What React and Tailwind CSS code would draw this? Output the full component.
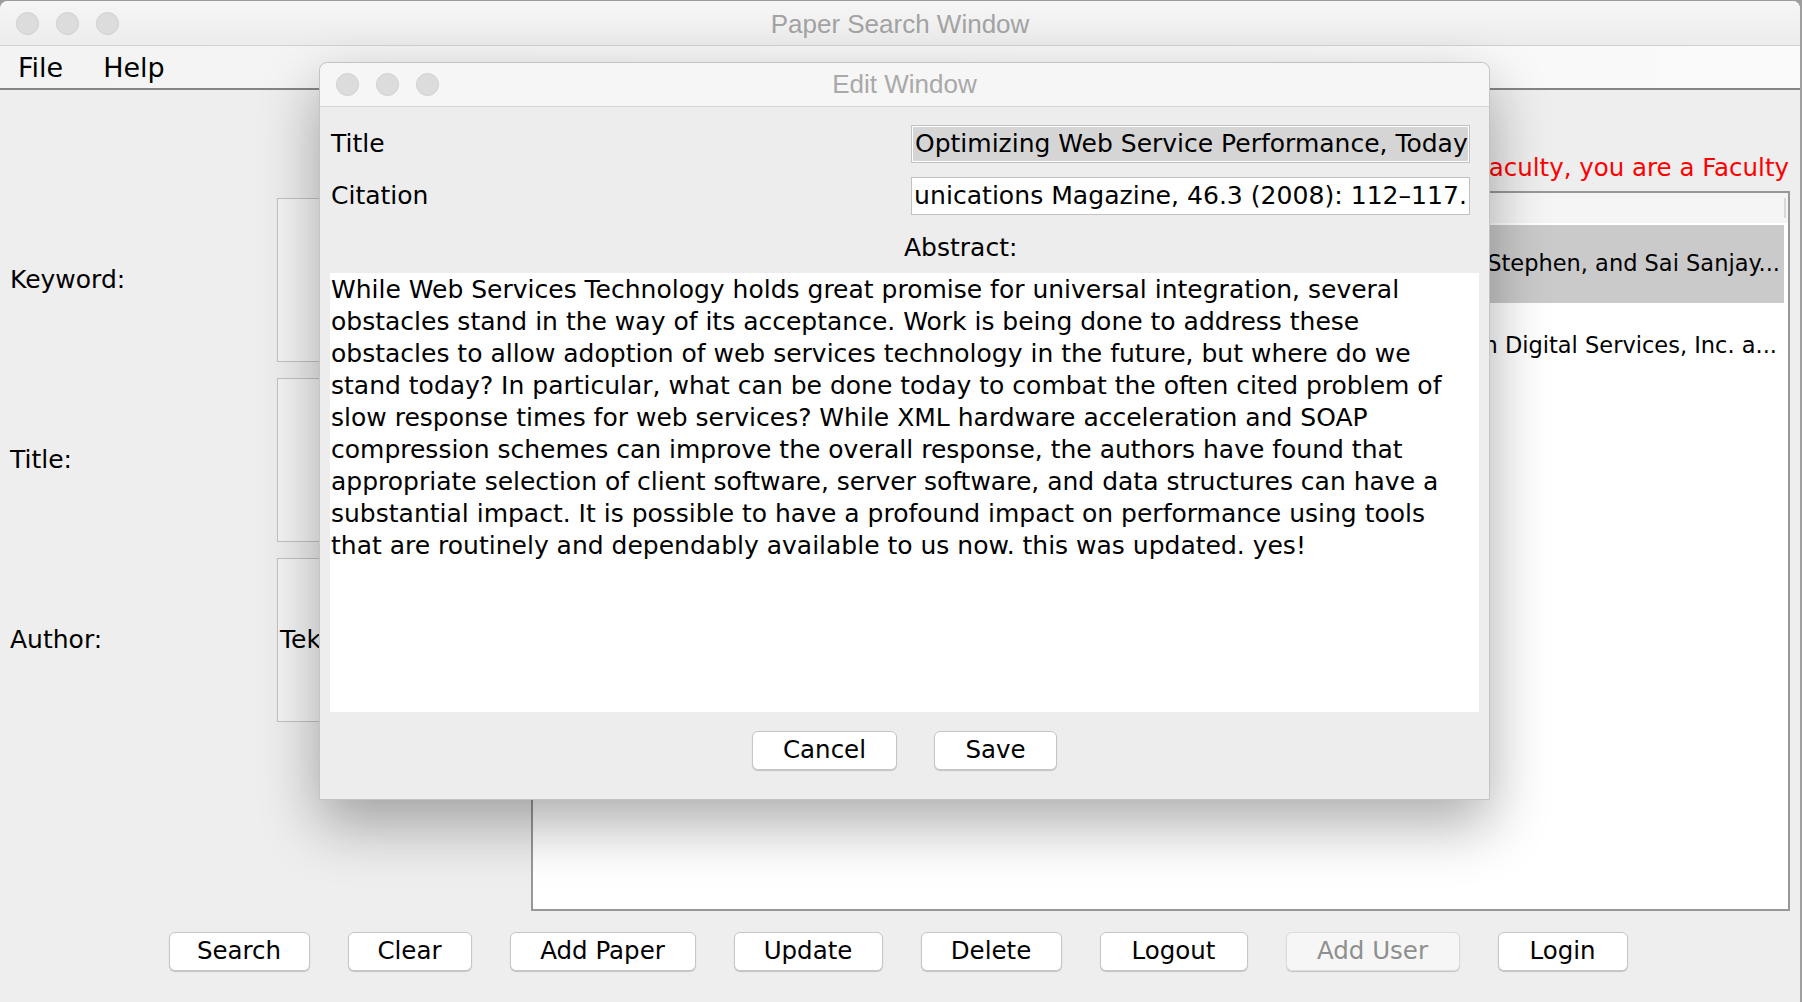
import React from "react";

const abstractLines = [
  "While Web Services Technology holds great promise for universal integration, several",
  "obstacles stand in the way of its acceptance. Work is being done to address these",
  "obstacles to allow adoption of web services technology in the future, but where do we",
  "stand today? In particular, what can be done today to combat the often cited problem of",
  "slow response times for web services? While XML hardware acceleration and SOAP",
  "compression schemes can improve the overall response, the authors have found that",
  "appropriate selection of client software, server software, and data structures can have a",
  "substantial impact. It is possible to have a profound impact on performance using tools",
  "that are routinely and dependably available to us now. this was updated. yes!",
];

const Lights = () => (
  <div className="flex items-center gap-[17px] pl-[16px]">
    <span className="w-[23px] h-[23px] rounded-full bg-[#dcdcdc] border border-[#d0d0d0]"></span>
    <span className="w-[23px] h-[23px] rounded-full bg-[#dcdcdc] border border-[#d0d0d0]"></span>
    <span className="w-[23px] h-[23px] rounded-full bg-[#dcdcdc] border border-[#d0d0d0]"></span>
  </div>
);

const MacButton = ({ label, width, disabled }) => (
  <button
    className={`${width} h-[39px] rounded-[6px] border text-[24.5px] leading-none shadow-[0_1px_1px_rgba(0,0,0,0.18)] ${
      disabled
        ? "bg-[#f6f6f6] border-[#dcdcdc] text-[#8f8f8f]"
        : "bg-white border-[#c6c6c6] text-black"
    }`}
  >
    {label}
  </button>
);

const EditWindow = () => (
  <div className="absolute left-[319px] top-[62px] w-[1171px] h-[738px] bg-[#ededed] rounded-t-[8px] border border-[#c4c4c4] shadow-[0_24px_60px_rgba(0,0,0,0.33)] flex flex-col">
    {/* title bar */}
    <div className="relative h-[44px] shrink-0 flex items-center bg-[#f6f6f6] rounded-t-[8px] border-b border-[#d6d6d6]">
      <Lights />
      <div className="absolute inset-0 flex items-center justify-center font-['Liberation_Sans',sans-serif] text-[26px] text-[#a9a9a9]">
        Edit Window
      </div>
    </div>

    {/* fields */}
    <div className="flex items-center h-[38px] mt-[18px] pl-[11px] pr-[19px]">
      <span className="flex-1 text-[25px]">Title</span>
      <div className="w-[559px] h-[38px] bg-[#d5d5d5] border border-[#c2c2c2] shadow-[inset_0_0_0_1px_#ffffff] flex items-center pl-[3px] overflow-hidden whitespace-nowrap text-[25px]">
        Optimizing Web Service Performance, Today
      </div>
    </div>
    <div className="flex items-center h-[38px] mt-[14px] pl-[11px] pr-[19px]">
      <span className="flex-1 text-[25px]">Citation</span>
      <div className="w-[559px] h-[38px] bg-white border border-[#c2c2c2] flex items-center justify-end pr-[2px] overflow-hidden whitespace-nowrap text-[25.1px]">
        unications Magazine, 46.3 (2008): 112–117.
      </div>
    </div>
    <div className="h-[58px] flex items-center pt-[8px] pl-[584px] text-[25px]">Abstract:</div>

    {/* abstract */}
    <div className="mx-[10px] h-[439px] bg-white overflow-hidden pl-[1px] pt-[1px] text-[25px] leading-[32px]">
      {abstractLines.map((line, i) => (
        <div key={i} className="whitespace-pre">
          {line}
        </div>
      ))}
    </div>

    <div className="flex justify-center gap-[37px] mt-[19px]">
      <MacButton label="Cancel" width="w-[145px] h-[38px]" />
      <MacButton label="Save" width="w-[123px] h-[38px]" />
    </div>
  </div>
);

export default function App() {
  return (
    <div className="relative w-[1802px] h-[1002px] overflow-hidden bg-[#9d9d9d] font-['DejaVu_Sans',sans-serif] text-black">
      <div className="mt-[1px] w-[1801px] h-[1001px] bg-[#eeeeee] rounded-t-[8px] border-r border-[#a0a0a0] flex flex-col overflow-hidden">
        {/* main title bar */}
        <div className="relative h-[45px] shrink-0 flex items-center bg-gradient-to-b from-[#f6f6f6] to-[#ececec] border-b border-[#d2d2d2]">
          <Lights />
          <div className="absolute inset-0 flex items-center justify-center pt-[2px] font-['Liberation_Sans',sans-serif] text-[26px] text-[#a3a3a3]">
            Paper Search Window
          </div>
        </div>

        {/* menu bar */}
        <div className="h-[44px] shrink-0 flex items-center gap-[40px] pl-[18px] pt-[2px] bg-gradient-to-r from-[#f3f3f3] via-[#f7f7f7] to-[#fafafa] border-b-2 border-[#858585] text-[27px]">
          <span>File</span>
          <span>Help</span>
        </div>

        {/* content */}
        <div className="flex h-[821px] shrink-0">
          <div className="w-[531px] shrink-0 pt-[108px] flex flex-col gap-[16px]">
            {["Keyword:", "Title:", "Author:"].map((label) => (
              <div key={label} className="flex items-center h-[164px]">
                <span className="w-[277px] pl-[10px] text-[25px]">{label}</span>
                <div className="w-[240px] h-[164px] bg-gradient-to-r from-[#f4f4f4] to-[#fbfbfb] border border-[#c3c3c3] flex items-center pl-[2px] text-[25px] overflow-hidden whitespace-nowrap">
                  {label === "Author:" ? "Tekinerdogan" : ""}
                </div>
              </div>
            ))}
          </div>

          <div className="flex-1 pr-[10px] pt-[63px] flex flex-col">
            <div className="h-[30px] flex items-center justify-end pr-[1px] text-[24.5px] text-[#ff0000] whitespace-nowrap overflow-hidden">
              Welcome Faculty, you are a Faculty
            </div>
            <div className="mt-[8px] h-[720px] border-2 border-[#989898] bg-white flex flex-col">
              <div className="h-[30px] bg-[#f5f5f5] flex items-center justify-end pr-[2px]">
                <span className="w-[2px] h-[20px] bg-[#d8d8d8]"></span>
              </div>
              <div className="mt-[2px] mr-[4px] h-[78px] bg-[#cacaca] flex items-center justify-end pr-[4px] text-[22.5px] whitespace-nowrap overflow-hidden">
                Tony, Stephen, and Sai Sanjay...
              </div>
              <div className="mr-[4px] h-[86px] flex items-center justify-end pr-[7px] text-[22.5px] whitespace-nowrap overflow-hidden">
                Boston Digital Services, Inc. a...
              </div>
            </div>
          </div>
        </div>

        {/* bottom buttons */}
        <div className="flex justify-center gap-[38px] pt-[21px] pr-[4px]">
          <MacButton label="Search" width="w-[141px]" />
          <MacButton label="Clear" width="w-[124px]" />
          <MacButton label="Add Paper" width="w-[186px]" />
          <MacButton label="Update" width="w-[149px]" />
          <MacButton label="Delete" width="w-[141px]" />
          <MacButton label="Logout" width="w-[148px]" />
          <MacButton label="Add User" width="w-[174px]" disabled />
          <MacButton label="Login" width="w-[130px]" />
        </div>
      </div>

      <EditWindow />
    </div>
  );
}
